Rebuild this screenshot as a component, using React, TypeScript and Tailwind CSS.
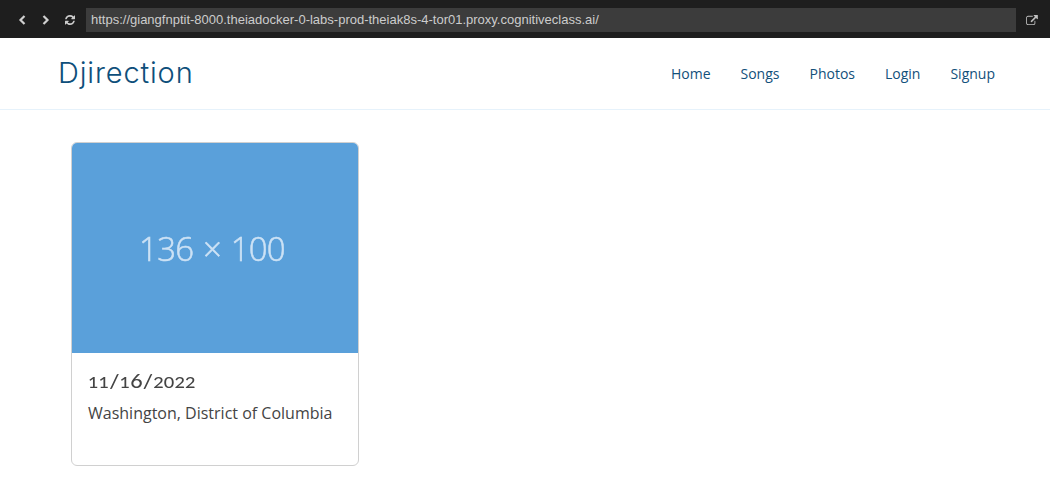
const links = ["Home", "Songs", "Photos", "Login", "Signup"];

function Chevron({ points }: { points: string }) {
  return (
    <svg viewBox="0 0 8 10" className="h-[10px] w-2" fill="none" stroke="#d0d0d0" strokeWidth="2.2">
      <polyline points={points} />
    </svg>
  );
}

function RefreshIcon() {
  return (
    <svg viewBox="0 0 1536 1536" className="h-[10px] w-[10px]" fill="#cccccc">
      <path d="M1511 928q0 5-1 7-64 268-268 434.5t-478 166.5q-146 0-282.5-55t-243.5-157l-129 129q-19 19-45 19t-45-19-19-45v-448q0-26 19-45t45-19h448q26 0 45 19t19 45-19 45l-137 137q71 66 161 102t187 36q134 0 250-65t186-179q11-17 53-117 8-23 30-23h192q13 0 22.5 9.5t9.5 22.5zm25-800v448q0 26-19 45t-45 19h-448q-26 0-45-19t-19-45 19-45l138-138q-148-137-349-137-134 0-250 65t-186 179q-11 17-53 117-8 23-30 23h-199q-13 0-22.5-9.5t-9.5-22.5v-7q65-268 270-434.5t480-166.5q146 0 284 55.5t245 156.5l130-129q19-19 45-19t45 19 19 45z" />
    </svg>
  );
}

function ExternalIcon() {
  return (
    <svg viewBox="0 0 1792 1536" className="h-[10px] w-[12px]" fill="#c0c0c0">
      <path d="M1408 928v320q0 119-84.5 203.5t-203.5 84.5h-832q-119 0-203.5-84.5t-84.5-203.5v-832q0-119 84.5-203.5t203.5-84.5h704q14 0 23 9t9 23v64q0 14-9 23t-23 9h-704q-66 0-113 47t-47 113v832q0 66 47 113t113 47h832q66 0 113-47t47-113v-320q0-14 9-23t23-9h64q14 0 23 9t9 23zm384-864v512q0 26-19 45t-45 19-45-19l-176-176-652 652q-10 10-23 10t-23-10l-114-114q-10-10-10-23t10-23l652-652-176-176q-19-19-19-45t19-45 45-19h512q26 0 45 19t19 45z" />
    </svg>
  );
}

function EventDate() {
  return (
    <h5 className="h-6 w-max origin-left scale-x-[1.13] whitespace-nowrap font-['Lato'] text-[16px] font-medium leading-[23px] tracking-[0.1px] text-[#444444]">
      11<span className="text-[20px]">/</span>1<span className="text-[19px]">6</span>
      <span className="text-[20px]">/</span>2022
    </h5>
  );
}

export default function App() {
  return (
    <div className="h-[490px] w-full overflow-hidden bg-white font-['Open_Sans',sans-serif]">
      <div className="flex h-[38px] items-center bg-[#1e1e1e] pb-px pl-[18px] pr-3 pt-[3px]">
        <Chevron points="6.5,1 2.5,5 6.5,9" />
        <div className="ml-4 flex">
          <Chevron points="1.5,1 5.5,5 1.5,9" />
        </div>
        <div className="ml-[15px]">
          <RefreshIcon />
        </div>
        <div className="ml-[11px] flex h-6 flex-1 items-center bg-[#3c3c3c] px-[5px] pb-px font-['Liberation_Sans',sans-serif] text-[13px] leading-none text-[#cccccc]">
          https://giangfnptit-8000.theiadocker-0-labs-prod-theiak8s-4-tor01.proxy.cognitiveclass.ai/
        </div>
        <div className="ml-[10px]">
          <ExternalIcon />
        </div>
      </div>
      <header className="flex h-[72px] items-center justify-between border-b border-[#e6f2fb] pl-[58px] pr-[55px]">
        <h1 className="pb-[2px] font-['Inter',sans-serif] text-[29px] font-light leading-9 tracking-[0.85px] text-[#0e4f7b]">
          Djirection
        </h1>
        <nav className="flex gap-[30px] text-sm">
          {links.map((link) => (
            <a key={link} className="text-[#12507b]">{link}</a>
          ))}
        </nav>
      </header>
      <main className="pl-[71px] pt-8">
        <article className="h-[324px] w-[288px] overflow-hidden rounded-md border border-[#d0d0d0] bg-white">
          <div className="flex h-[210px] items-center justify-center bg-[#5aa0da] pr-[6px] pt-px text-[33px] font-light text-[#cde2f5]">
            <span className="tracking-[-0.8px] blur-[0.7px] [-webkit-text-stroke:0.5px_#cde2f5] [word-spacing:2px]">136 × 100</span>
          </div>
          <div className="p-4">
            <EventDate />
            <p className="mt-2 whitespace-nowrap text-base text-[#444444]">Washington, District of Columbia</p>
          </div>
        </article>
      </main>
    </div>
  );
}
